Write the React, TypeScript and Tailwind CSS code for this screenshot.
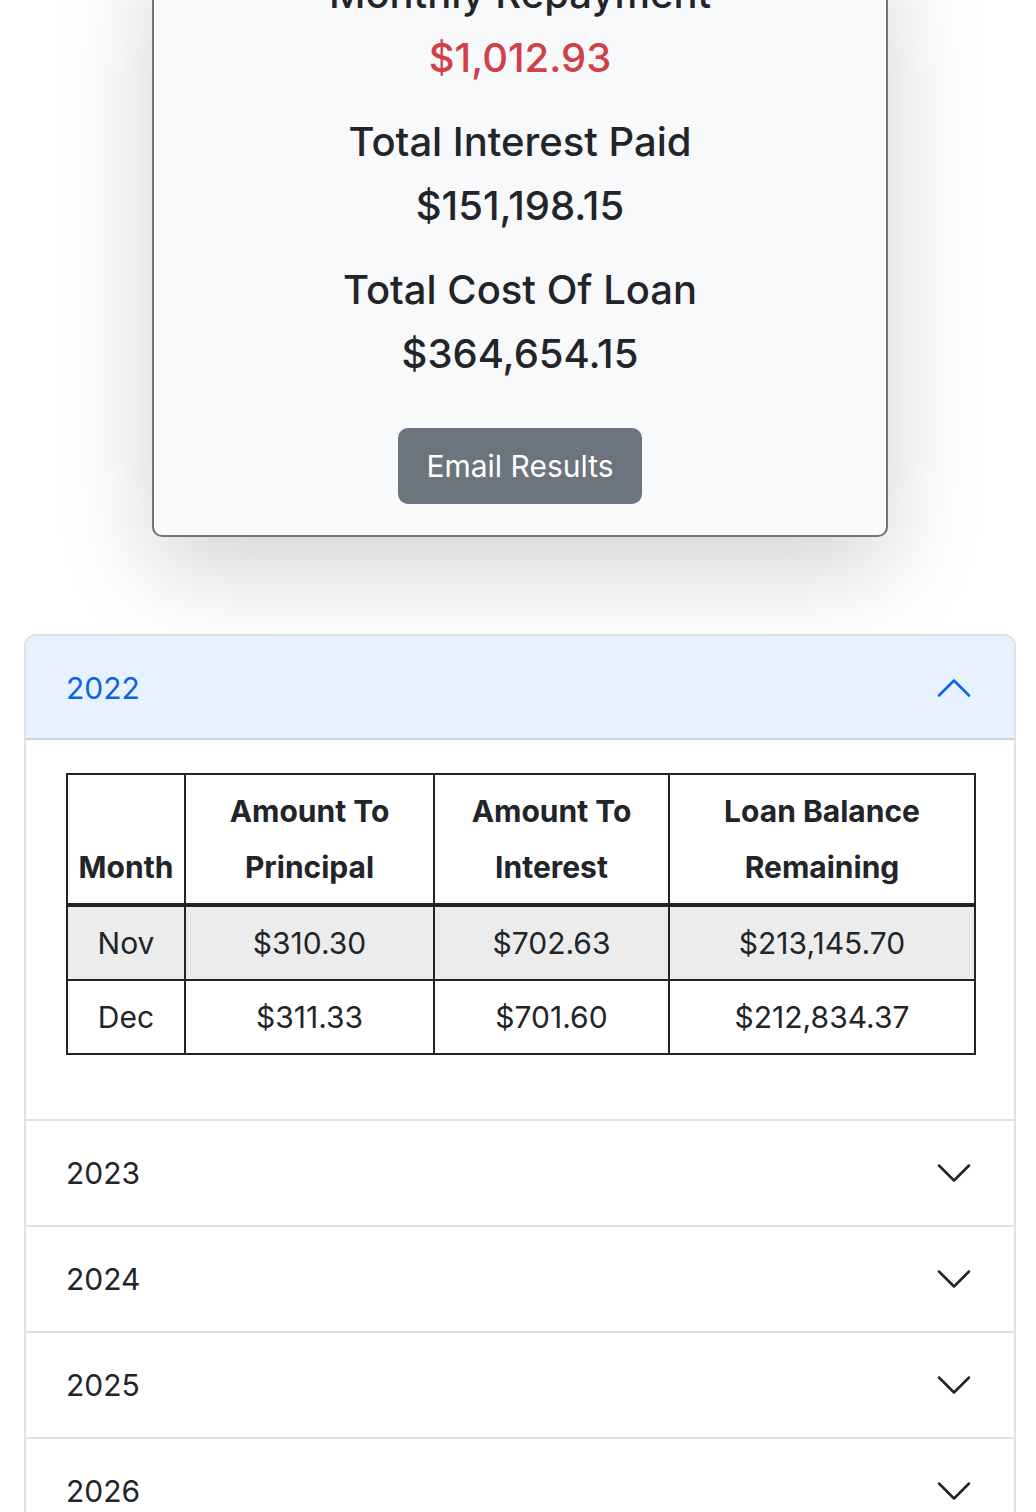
import React from "react";

const rows = [
  { month: "Nov", principal: "$310.30", interest: "$702.63", balance: "$213,145.70" },
  { month: "Dec", principal: "$311.33", interest: "$701.60", balance: "$212,834.37" },
];

const years = ["2023", "2024", "2025", "2026"];

function Chevron({ up, color }: { up?: boolean; color: string }) {
  return (
    <svg
      viewBox="0 0 16 16"
      fill="none"
      stroke={color}
      strokeLinecap="round"
      strokeLinejoin="round"
      className="h-[40px] w-[40px] shrink-0"
    >
      <path d={up ? "M2 11L8 5L14 11" : "M2 5L8 11L14 5"} />
    </svg>
  );
}

function Summary({ label, value, red }: { label: string; value: string; red?: boolean }) {
  return (
    <>
      <h5 className="mb-[16px] text-[40px] font-medium leading-[48px]">{label}</h5>
      <p
        className={
          "mb-[36px] text-[40px] font-medium leading-[48px] " +
          (red ? "text-[#d13f48]" : "text-[#212529]")
        }
      >
        {value}
      </p>
    </>
  );
}

export default function App() {
  return (
    <div
      className="min-h-[1512px] bg-white text-[#212529]"
      style={{ fontFamily: "Inter, 'Noto Sans', sans-serif" }}
    >
      {/* results card, top is scrolled off */}
      <div className="ml-[152px] mt-[-64px] w-[736px] rounded-[10px] border-2 border-[#6c757d] bg-[#f8f9fa] px-[32px] pb-[31px] pt-[32px] text-center shadow-[0_32px_96px_rgba(0,0,0,0.175)]">
        <Summary label="Monthly Repayment" value="$1,012.93" red />
        <Summary label="Total Interest Paid" value="$151,198.15" />
        <h5 className="mb-[16px] text-[40px] font-medium leading-[48px]">Total Cost Of Loan</h5>
        <p className="mb-[50px] text-[40px] font-medium leading-[48px]">$364,654.15</p>
        <button
          type="button"
          className="mx-auto flex h-[76px] w-[244px] items-center justify-center rounded-[10px] bg-[#6c757d] text-[30px] text-white"
        >
          Email Results
        </button>
      </div>

      {/* yearly breakdown */}
      <div className="ml-[24px] mt-[97px] w-[992px] overflow-hidden rounded-[12px] border-2 border-[#dee2e6]">
        <div>
          <div className="flex h-[104px] items-center justify-between bg-[#e7f1ff] px-[40px] text-[30px] text-[#0c63e4] shadow-[inset_0_-2px_0_rgba(0,0,0,0.125)]">
            <span>2022</span>
            <Chevron up color="#0c63e4" />
          </div>
          <div className="px-[40px] pb-[32px] pt-[33px]">
            <table className="mb-[32px] w-[908px] table-fixed border-collapse border-2 border-[#212529] text-center text-[30px] leading-[56px]">
              <colgroup>
                <col className="w-[118px]" />
                <col className="w-[249px]" />
                <col className="w-[235px]" />
                <col className="w-[306px]" />
              </colgroup>
              <thead>
                <tr className="align-bottom font-bold">
                  <th className="border-2 border-b-4 border-[#212529] px-[8px] py-[8px]">Month</th>
                  <th className="border-2 border-b-4 border-[#212529] px-[8px] py-[8px]">
                    Amount To
                    <br />
                    Principal
                  </th>
                  <th className="border-2 border-b-4 border-[#212529] px-[8px] py-[8px]">
                    Amount To
                    <br />
                    Interest
                  </th>
                  <th className="border-2 border-b-4 border-[#212529] px-[8px] py-[8px]">
                    Loan Balance
                    <br />
                    Remaining
                  </th>
                </tr>
              </thead>
              <tbody>
                {rows.map((r, i) => (
                  <tr key={r.month} className={i % 2 === 0 ? "bg-[#ececec]" : "bg-white"}>
                    <td className="border-2 border-[#212529] px-[8px] py-[8px]">{r.month}</td>
                    <td className="border-2 border-[#212529] px-[8px] py-[8px]">{r.principal}</td>
                    <td className="border-2 border-[#212529] px-[8px] py-[8px]">{r.interest}</td>
                    <td className="border-2 border-[#212529] px-[8px] py-[8px]">{r.balance}</td>
                  </tr>
                ))}
              </tbody>
            </table>
          </div>
        </div>

        {years.map((y) => (
          <div key={y} className="border-t-2 border-[#dee2e6]">
            <div className="flex h-[104px] items-center justify-between bg-white px-[40px] text-[30px] text-[#212529]">
              <span>{y}</span>
              <Chevron color="#212529" />
            </div>
          </div>
        ))}
      </div>
    </div>
  );
}
